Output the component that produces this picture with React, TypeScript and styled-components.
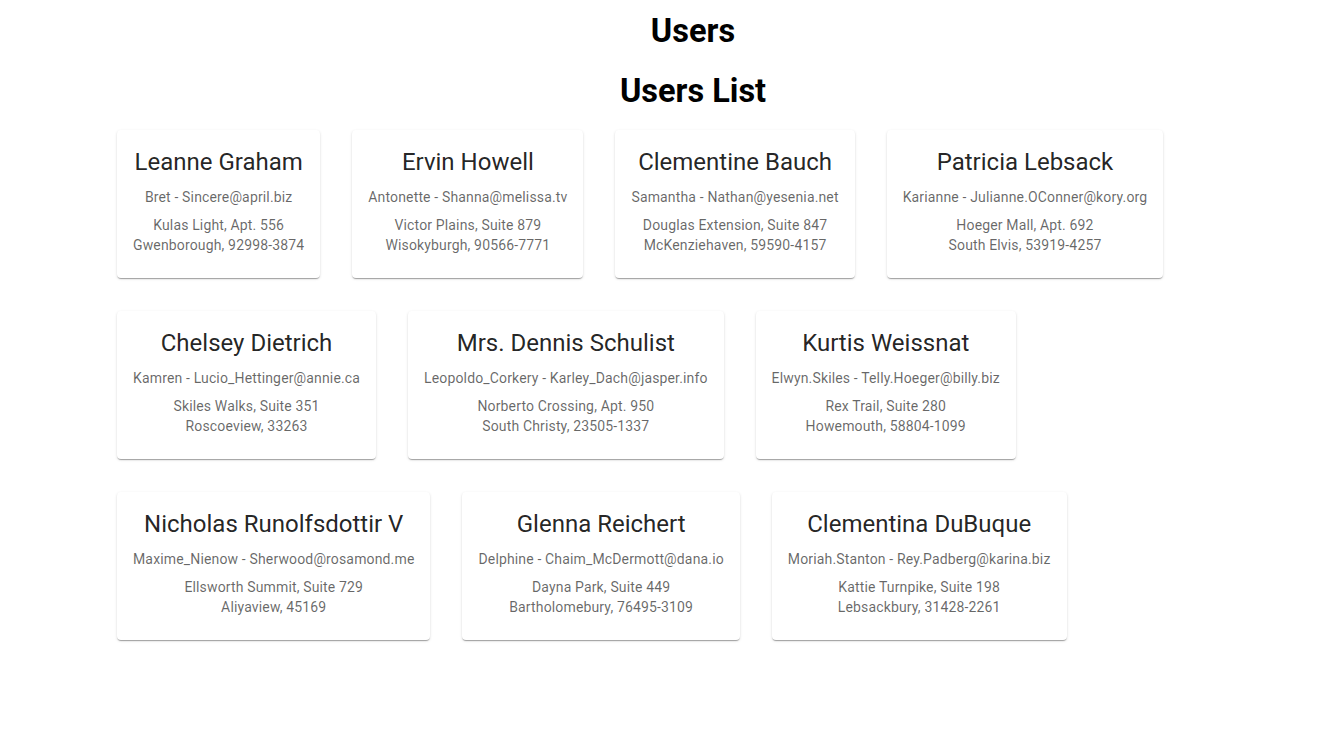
import React from "react";
import styled, { createGlobalStyle } from "styled-components";

const GlobalStyle = createGlobalStyle`
  html, body { margin: 0; padding: 0; background: #fff; }
  body { font-family: Roboto, "Liberation Sans", Arial, sans-serif; }
  * { box-sizing: border-box; }
`;

const Page = styled.div`
  width: 1200px;
  margin-left: 93px;
  padding: 13px 24px 40px;
`;

const Title = styled.h1<{ $gap: number }>`
  margin: 0 0 ${(p) => p.$gap}px;
  font-family: Roboto, "Liberation Sans", Arial, sans-serif;
  font-size: 32.5px;
  font-weight: 700;
  line-height: 37.5px;
  text-align: center;
  color: #000;
`;

const Grid = styled.div`
  display: flex;
  flex-wrap: wrap;
  gap: 33px 32px;
`;

const Card = styled.div`
  background: #fff;
  border-radius: 4px;
  box-shadow: 0px 2px 1px -1px rgba(0, 0, 0, 0.2), 0px 1px 1px 0px rgba(0, 0, 0, 0.14),
    0px 1px 3px 0px rgba(0, 0, 0, 0.12);
  padding: 16px 16px 24px;
  text-align: center;
  height: 148px;
`;

const Name = styled.div`
  font-size: 24px;
  line-height: 32px;
  font-weight: 400;
  color: rgba(0, 0, 0, 0.87);
  margin-bottom: 9px;
  white-space: nowrap;
`;

const Info = styled.div<{ $mb?: number }>`
  font-size: 14px;
  line-height: 20px;
  letter-spacing: 0.01071em;
  color: rgba(0, 0, 0, 0.6);
  margin-bottom: ${(p) => p.$mb ?? 0}px;
  white-space: nowrap;
`;

const users = [
  ["Leanne Graham", "Bret", "Sincere@april.biz", "Kulas Light, Apt. 556", "Gwenborough, 92998-3874"],
  ["Ervin Howell", "Antonette", "Shanna@melissa.tv", "Victor Plains, Suite 879", "Wisokyburgh, 90566-7771"],
  ["Clementine Bauch", "Samantha", "Nathan@yesenia.net", "Douglas Extension, Suite 847", "McKenziehaven, 59590-4157"],
  ["Patricia Lebsack", "Karianne", "Julianne.OConner@kory.org", "Hoeger Mall, Apt. 692", "South Elvis, 53919-4257"],
  ["Chelsey Dietrich", "Kamren", "Lucio_Hettinger@annie.ca", "Skiles Walks, Suite 351", "Roscoeview, 33263"],
  ["Mrs. Dennis Schulist", "Leopoldo_Corkery", "Karley_Dach@jasper.info", "Norberto Crossing, Apt. 950", "South Christy, 23505-1337"],
  ["Kurtis Weissnat", "Elwyn.Skiles", "Telly.Hoeger@billy.biz", "Rex Trail, Suite 280", "Howemouth, 58804-1099"],
  ["Nicholas Runolfsdottir V", "Maxime_Nienow", "Sherwood@rosamond.me", "Ellsworth Summit, Suite 729", "Aliyaview, 45169"],
  ["Glenna Reichert", "Delphine", "Chaim_McDermott@dana.io", "Dayna Park, Suite 449", "Bartholomebury, 76495-3109"],
  ["Clementina DuBuque", "Moriah.Stanton", "Rey.Padberg@karina.biz", "Kattie Turnpike, Suite 198", "Lebsackbury, 31428-2261"],
];

export default function App() {
  return (
    <>
      <GlobalStyle />
      <Page>
        <Title $gap={22}>Users</Title>
        <Title $gap={19.5}>Users List</Title>
        <Grid>
          {users.map(([name, username, email, street, city]) => (
            <Card key={name}>
              <Name>{name}</Name>
              <Info $mb={8}>
                {username} - {email}
              </Info>
              <Info>{street}</Info>
              <Info>{city}</Info>
            </Card>
          ))}
        </Grid>
      </Page>
    </>
  );
}
